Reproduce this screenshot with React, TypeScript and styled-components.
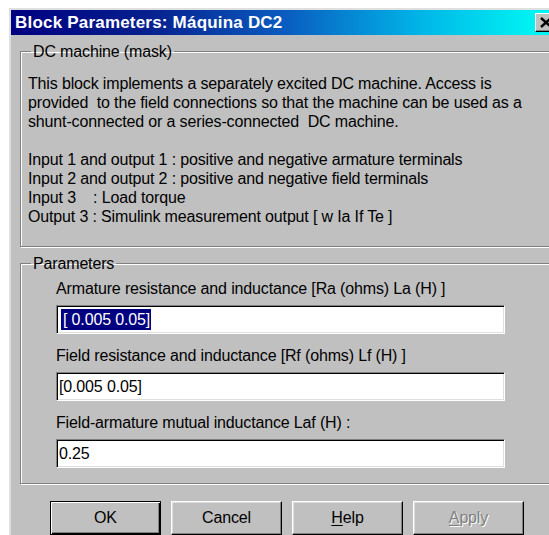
import styled, { createGlobalStyle } from "styled-components";

const GlobalStyle = createGlobalStyle`
  html, body {
    margin: 0;
    padding: 0;
    background: #ffffff;
    overflow: hidden;
  }
  body {
    font-family: "Liberation Sans", Arial, sans-serif;
    font-size: 16px;
    color: #000;
  }
`;

const Window = styled.div`
  margin: 8px 0 0 9px;
  width: 552px;
  height: 560px;
  background: #c0c0c0;
  border: 2px solid;
  border-color: #dfdfdf #404040 #404040 #dfdfdf;
  box-sizing: border-box;
  display: flex;
  flex-direction: column;
`;

const TitleBar = styled.div`
  height: 25px;
  display: flex;
  align-items: center;
  justify-content: space-between;
  padding: 0 2px 0 4px;
  background: linear-gradient(
    to right,
    #000080 0%,
    #06208e 25%,
    #0a5cc0 50%,
    #00b6e8 75%,
    #00f2f2 95%
  );
`;

const Title = styled.span`
  color: #fff;
  font-weight: bold;
  font-size: 17px;
  letter-spacing: 0.2px;
`;

const CloseButton = styled.div`
  width: 22px;
  height: 19px;
  box-sizing: border-box;
  background: #c0c0c0;
  border: 1px solid;
  border-color: #fff #000 #000 #fff;
  box-shadow: inset -1px -1px 0 #808080;
  display: flex;
  align-items: center;
  justify-content: center;
`;

const Body = styled.div`
  padding: 0 9px;
  display: flex;
  flex-direction: column;
`;

const Group = styled.fieldset`
  margin: 7px 0 0 0;
  padding: 0;
  border: 1px solid #808080;
  box-shadow: 1px 1px 0 #fff, inset 1px 1px 0 #fff;
  min-width: 0;
  & + & {
    margin-top: 7px;
  }
`;

const Legend = styled.legend`
  margin-left: 10px;
  padding: 0 2px;
  line-height: 19px;
  letter-spacing: -0.15px;
`;

const GroupContent = styled.div<{ $pad: string }>`
  padding: ${(p) => p.$pad};
  letter-spacing: -0.15px;
`;

const Description = styled.div`
  line-height: 19px;
  white-space: pre;
`;

const Gap = styled.div`
  height: 19px;
`;

const FieldLabel = styled.div`
  line-height: 19px;
  margin-bottom: 7px;
`;

const TextBox = styled.div`
  width: 449px;
  height: 29px;
  box-sizing: border-box;
  background: #fff;
  border: 1px solid;
  border-color: #808080 #fff #fff #808080;
  box-shadow: inset 1px 1px 0 #000, inset -1px -1px 0 #dfdfdf;
  padding: 0 0 0 2px;
  display: flex;
  align-items: center;
  margin-bottom: 12px;
  &:last-child {
    margin-bottom: 0;
  }
`;

const Selected = styled.span`
  margin-left: 2px;
  background: #000080;
  color: #fff;
  padding: 1px 1px 1px 2px;
  line-height: 19px;
`;

const ButtonRow = styled.div`
  display: flex;
  gap: 10px;
  margin: 17px 0 0 30px;
`;

const Button = styled.div<{ $default?: boolean; $disabled?: boolean }>`
  width: 111px;
  height: 34px;
  box-sizing: border-box;
  background: #c0c0c0;
  display: flex;
  align-items: center;
  justify-content: center;
  letter-spacing: -0.15px;
  border: 1px solid;
  border-color: ${(p) => (p.$default ? "#000" : "#fff #000 #000 #fff")};
  box-shadow: ${(p) =>
    p.$default
      ? "inset 1px 1px 0 #fff, inset -1px -1px 0 #000, inset -2px -2px 0 #808080"
      : "inset -1px -1px 0 #808080, inset 1px 1px 0 #dfdfdf"};
  color: ${(p) => (p.$disabled ? "#808080" : "#000")};
  text-shadow: ${(p) => (p.$disabled ? "1px 1px 0 #fff" : "none")};
  u {
    text-decoration: underline;
    text-underline-offset: 2px;
  }
`;

const CloseIcon = () => (
  <svg width="12" height="11" viewBox="0 0 12 11">
    <path d="M1 1 L11 10 M11 1 L1 10" stroke="#000" strokeWidth="2.4" />
  </svg>
);

export default function App() {
  return (
    <>
      <GlobalStyle />
      <Window>
        <TitleBar>
          <Title>Block Parameters: Máquina DC2</Title>
          <CloseButton>
            <CloseIcon />
          </CloseButton>
        </TitleBar>
        <Body>
          <Group>
            <Legend>DC machine (mask)</Legend>
            <GroupContent $pad="13px 8px 20px 7px">
              <Description>
                {"This block implements a separately excited DC machine. Access is\n" +
                  "provided  to the field connections so that the machine can be used as a\n" +
                  "shunt-connected or a series-connected  DC machine."}
              </Description>
              <Gap />
              <Description>
                {"Input 1 and output 1 : positive and negative armature terminals\n" +
                  "Input 2 and output 2 : positive and negative field terminals\n" +
                  "Input 3    : Load torque\n" +
                  "Output 3 : Simulink measurement output [ w Ia If Te ]"}
              </Description>
            </GroupContent>
          </Group>
          <Group>
            <Legend>Parameters</Legend>
            <GroupContent $pad="6px 8px 15px 35px">
              <FieldLabel>Armature resistance and inductance [Ra (ohms) La (H) ]</FieldLabel>
              <TextBox>
                <Selected>[ 0.005 0.05]</Selected>
              </TextBox>
              <FieldLabel>Field resistance and inductance [Rf (ohms) Lf (H) ]</FieldLabel>
              <TextBox>[0.005 0.05]</TextBox>
              <FieldLabel>Field-armature mutual inductance Laf (H) :</FieldLabel>
              <TextBox>0.25</TextBox>
            </GroupContent>
          </Group>
          <ButtonRow>
            <Button $default>OK</Button>
            <Button>Cancel</Button>
            <Button>
              <span>
                <u>H</u>elp
              </span>
            </Button>
            <Button $disabled>
              <span>
                <u>A</u>pply
              </span>
            </Button>
          </ButtonRow>
        </Body>
      </Window>
    </>
  );
}
